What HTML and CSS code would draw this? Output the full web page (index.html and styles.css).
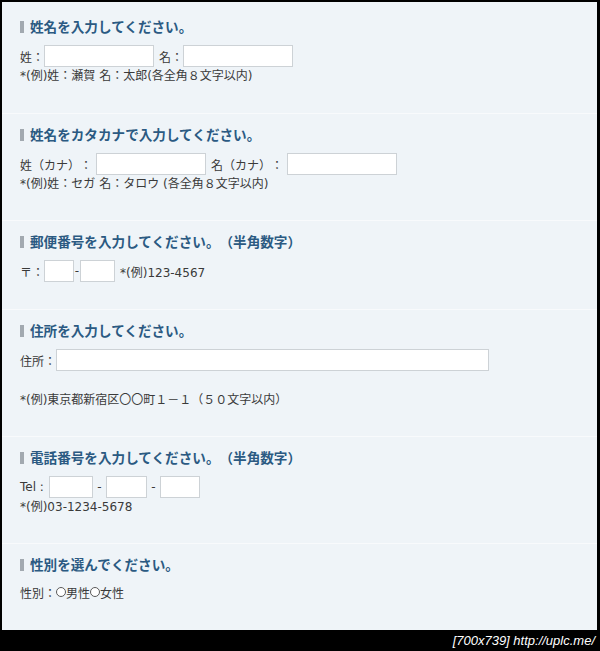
FILE: index.html
```html
<!DOCTYPE html>
<html lang="ja">
<head>
<meta charset="utf-8">
<title>フォーム</title>
<link rel="stylesheet" href="styles.css">
</head>
<body>
<div class="page">
  <section class="sec first">
    <h2 class="head">姓名を入力してください。</h2>
    <div class="row">
      <span class="lbl">姓：</span><input class="box w110" type="text">
      <span class="lbl gap">名：</span><input class="box w110" type="text">
    </div>
    <p class="note">*(例)姓：瀬賀 名：太郎(各全角８文字以内)</p>
  </section>

  <section class="sec">
    <h2 class="head">姓名をカタカナで入力してください。</h2>
    <div class="row">
      <span class="lbl">姓（カナ）：</span><input class="box w110 sp" type="text">
      <span class="lbl gap">名（カナ）：</span><input class="box w110 sp" type="text">
    </div>
    <p class="note">*(例)姓：セガ 名：タロウ (各全角８文字以内)</p>
  </section>

  <section class="sec">
    <h2 class="head">郵便番号を入力してください。（半角数字）</h2>
    <div class="row">
      <span class="lbl">〒：</span><input class="box w30" type="text"><span class="dash">-</span><input class="box w35" type="text">
      <span class="lbl zip">*(例)123-4567</span>
    </div>
  </section>

  <section class="sec">
    <h2 class="head">住所を入力してください。</h2>
    <div class="row">
      <span class="lbl">住所：</span><input class="box w433" type="text">
    </div>
    <p class="note blank">&nbsp;</p>
    <p class="note">*(例)東京都新宿区〇〇町１－１（５０文字以内）</p>
  </section>

  <section class="sec">
    <h2 class="head">電話番号を入力してください。（半角数字）</h2>
    <div class="row">
      <span class="lbl tel">Tel :</span><input class="box w44" type="text"><span class="sep">-</span><input class="box w41" type="text"><span class="sep">-</span><input class="box w40" type="text">
    </div>
    <p class="note">*(例)03-1234-5678</p>
  </section>

  <section class="sec last">
    <h2 class="head">性別を選んでください。</h2>
    <div class="row short">
      <span class="lbl">性別：</span><input class="radio" type="radio" name="sex"><span class="lbl">男性</span><input class="radio" type="radio" name="sex"><span class="lbl">女性</span>
    </div>
  </section>
</div>
<div class="footer">[700x739] http://uplc.me/</div>
</body>
</html>
```
FILE: styles.css
```css
html, body {
  margin: 0;
  padding: 0;
  background: #000;
}
body {
  font-family: "DejaVu Sans", "Noto Sans CJK JP", sans-serif;
  font-size: 12px;
  color: #3a3a3a;
  width: 600px;
  height: 651px;
  overflow: hidden;
  text-spacing-trim: space-all;
}
.page {
  margin: 2px 3px 0 2px;
  height: 628px;
  background: #eff4f8;
  overflow: hidden;
}
.sec {
  padding: 12px 0 27px 18px;
  border-top: 1px solid #f8fafc;
}
.sec.first {
  border-top: 0;
  padding-top: 16px;
  padding-bottom: 28px;
}
.head {
  margin: 0 0 9px 0;
  font-size: 13.6px;
  font-weight: bold;
  line-height: 18px;
  color: #2b5a82;
  display: flex;
  align-items: center;
}
.head::before {
  content: "";
  width: 4px;
  height: 12px;
  background: #a2a9b0;
  margin-right: 6px;
}
.row {
  display: flex;
  align-items: center;
  height: 22px;
}
.row.short {
  height: 18px;
}
.lbl {
  white-space: nowrap;
}
.box {
  box-sizing: border-box;
  height: 22px;
  border: 1px solid #cdd2d6;
  background: #fff;
  margin: 0;
  padding: 0;
  font: inherit;
}
.gap {
  margin-left: 5px;
}
.box.sp {
  margin-left: 4px;
}
.zip {
  margin-left: 5px;
}
.tel {
  width: 29px;
}
.w110 { width: 110px; }
.w30 { width: 30px; }
.w35 { width: 35px; }
.w433 { width: 433px; }
.w44 { width: 44px; }
.w41 { width: 41px; }
.w40 { width: 40px; }
.dash {
  width: 6px;
  text-align: center;
}
.sep {
  width: 13px;
  text-align: center;
}
.note {
  margin: 0;
  line-height: 18px;
  white-space: nowrap;
}
.note.blank {
  height: 20px;
}
.radio {
  appearance: none;
  -webkit-appearance: none;
  width: 10px;
  height: 10px;
  margin: 0;
  border: 1px solid #5a5a5a;
  border-radius: 50%;
  background: #fff;
  box-sizing: border-box;
}
.footer {
  height: 21px;
  line-height: 21px;
  text-align: right;
  padding-right: 5px;
  color: #fff;
  font-family: "Liberation Sans", sans-serif;
  font-style: italic;
  font-size: 13px;
}
```
